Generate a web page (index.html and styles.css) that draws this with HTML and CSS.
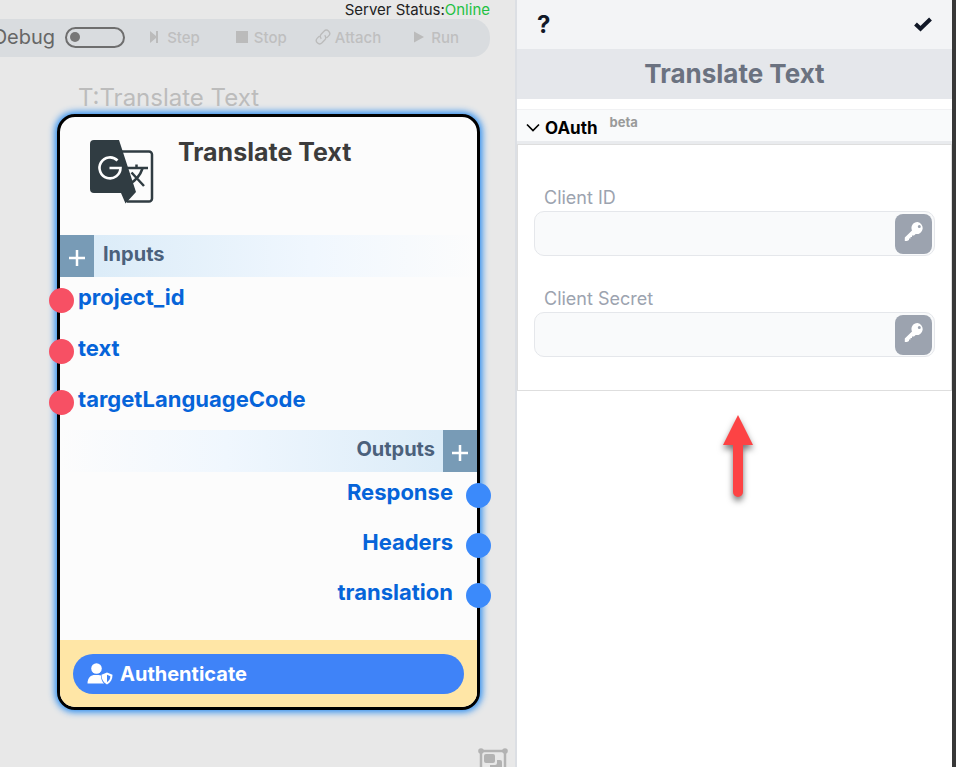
FILE: index.html
```html
<!DOCTYPE html>
<html lang="en">
<head>
<meta charset="utf-8">
<title>Translate Text</title>
<link rel="stylesheet" href="styles.css">
</head>
<body>
<div class="app">
  <main class="canvas">
    <p class="status">Server Status:<span class="status-online">Online</span></p>
    <div class="toolbar">
      <label class="debug">Debug <input type="checkbox" class="switch"></label>
      <button class="tool" type="button" disabled>
        <svg width="12" height="12" viewBox="0 0 12 12"><path d="M1 0l6 5V0h2v12H7V7l-6 5z"/></svg>Step
      </button>
      <button class="tool" type="button" disabled>
        <svg width="12" height="12" viewBox="0 0 12 12"><path d="M0 0h12v12H0z"/></svg>Stop
      </button>
      <button class="tool tool-attach" type="button" disabled>
        <svg class="line" width="16" height="16" viewBox="0 0 24 24"><path d="M9.500 14.500a5 5 0 0 1 0-7l4-4.200a4.900 4.900 0 0 1 7 7l-3 3M14.500 9.500a5 5 0 0 1 0 7l-4 4.200a4.900 4.900 0 0 1-7-7l3-3"/></svg>Attach
      </button>
      <button class="tool tool-run" type="button" disabled>
        <svg width="12" height="12" viewBox="0 0 12 12"><path d="M1 0.500l10 5.500-10 5.500z"/></svg>Run
      </button>
    </div>

    <section class="node-wrap">
      <p class="node-caption">T:Translate Text</p>
      <article class="node">
        <header class="node-head">
          <svg class="logo" width="64" height="64" viewBox="0 0 64 64">
            <path d="M30 11.500h29a3 3 0 0 1 3 3V58.500a3 3 0 0 1-3 3H37" fill="none" stroke="#303c42" stroke-width="2.500"/>
            <path d="M37 28H58M46.500 24.500V28M52.500 28.500C50 36 45 41 39 44.500M41.500 32.500L54 46" fill="none" stroke="#303c42" stroke-width="2.500"/>
            <path d="M4 0H29L46 52 35.500 63.500 31 53H4a4 4 0 0 1-4-4V4a4 4 0 0 1 4-4z" fill="#303c42"/>
            <path d="M27.500 20.500A10.500 10.500 0 1 0 30.500 28H19.500" fill="none" stroke="#fff" stroke-width="2.600"/>
          </svg>
          <h2>Translate Text</h2>
        </header>

        <div class="bar bar-in">
          <button class="add" type="button" aria-label="Add input"><svg width="16" height="16" viewBox="0 0 16 16"><path d="M8 0v16M0 8h16"/></svg></button>
          <h3>Inputs</h3>
        </div>
        <ul class="ports ports-in">
          <li><i class="dot"></i><span>project_id</span></li>
          <li><i class="dot"></i><span>text</span></li>
          <li><i class="dot"></i><span>targetLanguageCode</span></li>
        </ul>

        <div class="bar bar-out">
          <h3>Outputs</h3>
          <button class="add" type="button" aria-label="Add output"><svg width="16" height="16" viewBox="0 0 16 16"><path d="M8 0v16M0 8h16"/></svg></button>
        </div>
        <ul class="ports ports-out">
          <li><span>Response</span><i class="dot"></i></li>
          <li><span>Headers</span><i class="dot"></i></li>
          <li><span>translation</span><i class="dot"></i></li>
        </ul>

        <footer class="node-foot">
          <button class="auth" type="button">
            <svg width="26" height="22" viewBox="0 0 26 22">
              <circle cx="9.500" cy="5.500" r="5.300"/>
              <path d="M0.500 20.500C0.500 14.500 4 12 8 12h3.500q1.500 0 2.500.5C14 16 15 18.500 17 20.500z"/>
              <path d="M20 9.500l5.500 2.200c0 4.500-1.700 7.800-5.500 9.800-3.800-2-5.500-5.300-5.500-9.800z"/>
              <path d="M20 11.800l3.400 1.400c-.2 2.700-1.300 4.600-3.400 6z" fill="#3f83f8"/>
            </svg>
            Authenticate
          </button>
        </footer>
      </article>
    </section>

    <button class="fit" type="button" aria-label="Fit to view">
      <svg width="30" height="26" viewBox="0 0 30 26">
        <path d="M3 3h24v20H3z" fill="none" stroke="#b3b3b3" stroke-width="2.500"/>
        <circle cx="3" cy="3" r="2.800"/><circle cx="27" cy="3" r="2.800"/><circle cx="3" cy="23" r="2.800"/><circle cx="27" cy="23" r="2.800"/>
        <rect x="6" y="6" width="11" height="9" rx="2"/>
        <path d="M19 12h3a2 2 0 0 1 2 2v6H12v-3h5a2 2 0 0 0 2-2z"/>
      </svg>
    </button>
  </main>

  <aside class="panel">
    <header class="panel-head">
      <button class="icon-btn" type="button">?</button>
      <button class="icon-btn" type="button" aria-label="Done"><svg width="18" height="18" viewBox="0 0 18 18"><path d="M1.500 8l5 4.800L16.500 3" fill="none" stroke="#111827" stroke-width="4"/></svg></button>
    </header>
    <h1 class="panel-title">Translate Text</h1>
    <details class="group" open>
      <summary>
        <svg width="14" height="9" viewBox="0 0 14 9"><path d="M1 1.500l6 6 6-6" fill="none" stroke="#000" stroke-width="1.700"/></svg>
        <span>OAuth</span><span class="beta">beta</span>
      </summary>
      <form class="fields">
        <div class="field">
          <label for="client-id">Client ID</label>
          <div class="control">
            <input id="client-id" type="text">
            <button class="key" type="button" aria-label="Choose secret for Client ID"><svg width="20" height="20" viewBox="0 0 20 20"><path fill-rule="evenodd" d="M13.500 0a6 6 0 1 1-1.800 12L10 13.500H8V15H6.500v1.500H5V18l-2 1H.8v-3.500L8 8.500A6 6 0 0 1 13.500 0zM15.300 3a1.500 1.500 0 1 0 0 3A1.500 1.500 0 0 0 15.300 3z"/></svg></button>
          </div>
        </div>
        <div class="field">
          <label for="client-secret">Client Secret</label>
          <div class="control">
            <input id="client-secret" type="text">
            <button class="key" type="button" aria-label="Choose secret for Client Secret"><svg width="20" height="20" viewBox="0 0 20 20"><path fill-rule="evenodd" d="M13.500 0a6 6 0 1 1-1.800 12L10 13.500H8V15H6.500v1.500H5V18l-2 1H.8v-3.500L8 8.500A6 6 0 0 1 13.500 0zM15.300 3a1.500 1.500 0 1 0 0 3A1.500 1.500 0 0 0 15.300 3z"/></svg></button>
          </div>
        </div>
      </form>
    </details>
    <svg class="arrow" width="40" height="96" viewBox="0 0 40 96"><path d="M23 4l15 30H28V81a5 5 0 0 1-10 0V34H8z"/></svg>
  </aside>
</div>
</body>
</html>
```
FILE: styles.css
```css
* { box-sizing: border-box; }

body {
  margin: 0;
  font-family: Inter, "Liberation Sans", sans-serif;
  color: #222;
}

h1, h2, h3, p, ul { margin: 0; padding: 0; }
button { font: inherit; border: 0; padding: 0; background: none; color: inherit; }
svg { display: block; flex: none; }

.app {
  display: grid;
  grid-template-columns: minmax(0, 515fr) minmax(0, 441fr);
  height: 100vh;
  overflow: hidden;
}

/* Canvas */
.canvas {
  position: relative;
  overflow: hidden;
  background: #e8e8e8;
}

.status {
  padding-right: 25px;
  font-size: 15px;
  line-height: 19px;
  text-align: right;
}
.status-online { color: #1fc143; }

.toolbar {
  display: flex;
  justify-content: flex-end;
  align-items: center;
  height: 38px;
  margin-right: 25px;
  padding: 0 31px 2px 0;
  border-radius: 0 18px 18px 0;
  background: #d9dcdf;
  white-space: nowrap;
}

.debug {
  display: flex;
  align-items: center;
  gap: 10px;
  margin-right: 24px;
  font-size: 20px;
  color: #666;
}
.switch {
  appearance: none;
  display: flex;
  align-items: center;
  width: 60px;
  height: 21px;
  margin: 0;
  padding: 0 3px;
  border: 2px solid #6e6e6e;
  border-radius: 11px;
}
.switch::before {
  content: "";
  width: 10px;
  height: 10px;
  border-radius: 50%;
  background: #777;
}

.tool {
  display: flex;
  align-items: center;
  gap: 6px;
  margin-right: 36px;
  font-size: 15px;
  font-weight: 500;
  color: #bfbfbf;
}
.tool svg { fill: #bbb; }
.tool .line { fill: none; stroke: #bbb; stroke-width: 2; }
.tool:nth-child(3) { margin-right: 28px; }
.tool-attach { gap: 4px; margin-right: 32px; }
.tool-run { margin-right: 0; }

.node-wrap {
  position: absolute;
  left: 57px;
  top: 82px;
  width: 423px;
}
.node-caption {
  padding-left: 21px;
  font-size: 24px;
  line-height: 32px;
  color: #bcbcbc;
}
.node {
  border: 3px solid #000;
  border-radius: 18px;
  background: #fcfcfc;
  box-shadow: 0 0 7px 2px #2389f0;
}
.node-head {
  display: flex;
  align-items: flex-start;
  gap: 24px;
  height: 118px;
  padding: 23px 0 0 30px;
}
.node-head h2 {
  font-size: 25px;
  line-height: 24px;
  font-weight: 700;
  color: #3c3c3c;
}

.bar {
  display: flex;
  height: 42px;
}
.bar h3 {
  font-size: 20px;
  line-height: 38px;
  font-weight: 700;
  color: #4b617c;
}
.bar-in {
  gap: 9px;
  background: linear-gradient(to right, #d8eaf7, #f0f7fe 60%, #fcfcfc);
}
.bar-out {
  justify-content: flex-end;
  gap: 8px;
  background: linear-gradient(to left, #d8eaf7, #f0f7fe 60%, #fcfcfc);
}
.add {
  display: flex;
  align-items: center;
  justify-content: center;
  width: 34px;
  padding-top: 4px;
  background: #789bb6;
}
.add path { stroke: #fff; stroke-width: 2.500; }

.ports {
  display: flex;
  flex-direction: column;
  gap: 5px;
  list-style: none;
  font-size: 22px;
  line-height: 40px;
  font-weight: 700;
  color: #0664d9;
}
.ports li {
  display: flex;
  align-items: center;
  height: 46px;
}
.ports span { padding-bottom: 6px; }
.dot {
  width: 25px;
  height: 25px;
  border-radius: 50%;
}
.ports-in { padding-bottom: 5px; }
.ports-in li { gap: 4px; margin-left: -11px; }
.ports-in .dot { background: #f75064; }
.ports-out { gap: 4px; padding-bottom: 22px; }
.ports-out li { justify-content: flex-end; gap: 13px; margin-right: -14px; }
.ports-out .dot { background: #3b8afb; }

.node-foot {
  padding: 14px 13px 13px;
  border-radius: 0 0 15px 15px;
  background: #ffe6a6;
}
.auth {
  display: flex;
  align-items: center;
  gap: 7px;
  width: 100%;
  height: 40px;
  padding-left: 14px;
  border-radius: 20px;
  background: #3f83f8;
  font-size: 20px;
  font-weight: 700;
  color: #fff;
}
.auth svg { fill: #fff; }

.fit {
  position: absolute;
  right: 7px;
  bottom: -7px;
}
.fit svg { fill: #b3b3b3; }

/* Settings panel */
.panel {
  border-left: 2px solid #dcdfe4;
  border-right: 4px solid #383838;
  background: #fff;
}
.panel-head {
  display: flex;
  justify-content: space-between;
  align-items: center;
  height: 49px;
  padding: 0 20px;
  background: #f3f4f6;
}
.icon-btn {
  font-size: 24px;
  font-weight: 700;
  color: #111827;
}
.panel-title {
  font-size: 26px;
  line-height: 50px;
  font-weight: 700;
  text-align: center;
  color: #6b7280;
  background: #e5e7eb;
}

.group { margin-top: 10px; }
.group summary {
  display: flex;
  align-items: center;
  height: 35px;
  padding: 4px 9px 0;
  border-top: 1px solid #f0f1f3;
  border-bottom: 3px solid #e9ebee;
  background: #f9fafb;
  font-size: 17px;
  font-weight: 700;
  color: #000;
}
.group summary svg { margin-right: 5px; }
.beta {
  margin-left: 12px;
  padding-bottom: 11px;
  font-size: 13px;
  color: #9a9a9a;
}
.fields {
  display: grid;
  gap: 30px;
  padding: 40px 16px 33px;
  border: 1px solid #dedede;
}
.field label {
  display: block;
  padding-left: 10px;
  font-size: 18px;
  line-height: 26px;
  color: #9ca3af;
}
.control {
  display: flex;
  align-items: center;
  height: 45px;
  padding-right: 2px;
  border: 1px solid #e5e7eb;
  border-radius: 10px;
  background: #f9fafb;
}
.control input {
  flex: 1;
  min-width: 0;
  height: 100%;
  padding: 0 10px;
  border: 0;
  outline: 0;
  background: none;
  font: inherit;
}
.key {
  display: flex;
  align-items: center;
  justify-content: center;
  width: 37px;
  height: 40px;
  padding-bottom: 4px;
  border-radius: 8px;
  background: #9ca3af;
}
.key svg { fill: #fff; }

.arrow {
  margin: 20px auto 0;
  fill: #fd4344;
  overflow: visible;
  filter: drop-shadow(0 4px 3px #0008);
}
```
